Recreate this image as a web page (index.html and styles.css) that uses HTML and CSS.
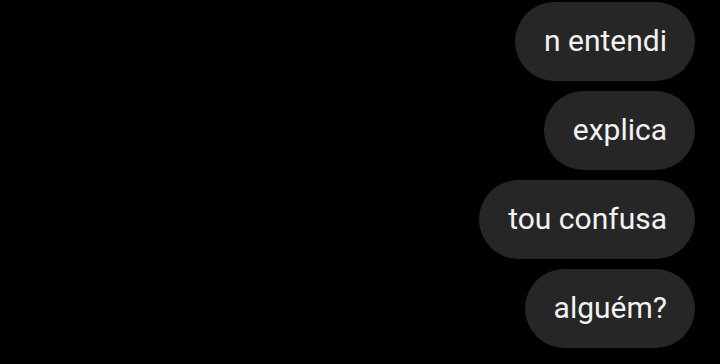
FILE: index.html
```html
<!DOCTYPE html>
<html>
<head>
<meta charset="utf-8">
<link rel="stylesheet" href="styles.css">
</head>
<body>
<div class="chat">
  <div class="bubble">n entendi</div>
  <div class="bubble">explica</div>
  <div class="bubble">tou confusa</div>
  <div class="bubble">alguém?</div>
</div>
</body>
</html>
```
FILE: styles.css
```css
html, body {
  margin: 0;
  padding: 0;
  background: #000;
  height: 100%;
}
.chat {
  display: flex;
  flex-direction: column;
  align-items: flex-end;
  gap: 10px;
  padding: 2px 25px 0 0;
}
.bubble {
  background: #262626;
  color: #f2f2f2;
  font-family: Roboto, "Noto Sans", sans-serif;
  font-size: 30px;
  height: 79px;
  box-sizing: border-box;
  padding: 0 28px 2px 29px;
  display: flex;
  align-items: center;
  border-radius: 40px;
}
```
